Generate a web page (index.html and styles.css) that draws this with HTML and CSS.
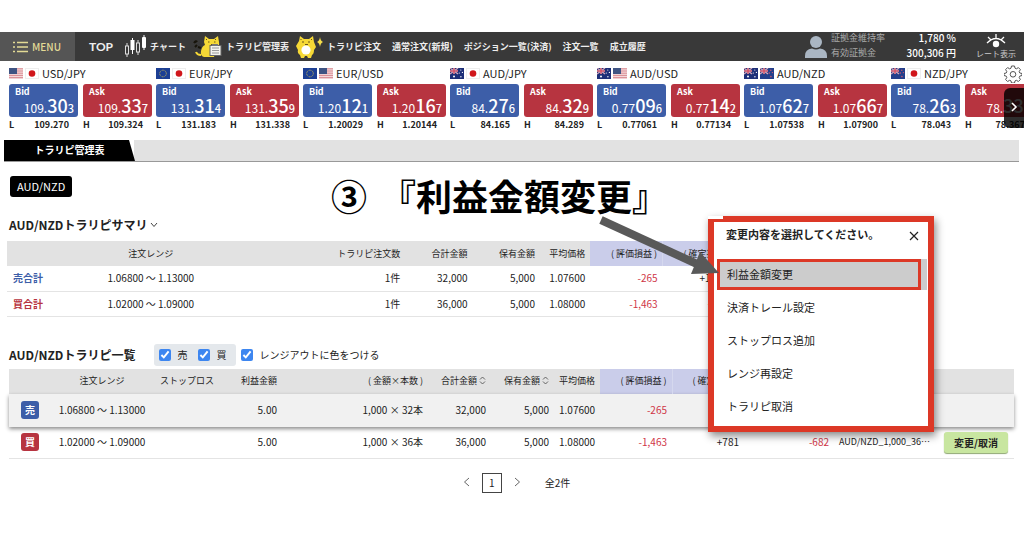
FILE: index.html
```html
<!DOCTYPE html>
<html lang="ja">
<head>
<meta charset="utf-8">
<meta name="viewport" content="width=device-width, initial-scale=1">
<title>トラリピ管理表</title>
<link rel="stylesheet" href="styles.css">
</head>
<body>
<svg class="defs" aria-hidden="true">
  <symbol id="us" viewBox="0 0 14 11"><rect width="14" height="11" fill="#f3d9db"/><path d="M0 .8h14M0 3h14M0 5.2h14M0 7.4h14M0 9.6h14" stroke="#d98a92"/><rect width="8" height="6" fill="#3f5483"/></symbol>
  <symbol id="jp" viewBox="0 0 14 11"><rect x=".5" y=".5" width="13" height="10" fill="#fff" stroke="#eee"/><circle cx="7" cy="5.5" r="3.3" fill="#d0161b"/></symbol>
  <symbol id="eu" viewBox="0 0 14 11"><rect width="14" height="11" fill="#1c3f94"/><circle cx="7" cy="5.5" r="3.3" fill="none" stroke="#b9ad5a" stroke-dasharray="1 .73"/></symbol>
  <symbol id="au" viewBox="0 0 14 11"><rect width="14" height="11" fill="#1d2f78"/><path d="M0 0l8 6M8 0L0 6" stroke="#d6a9bb" stroke-width="1.2"/><path d="M4 0v6M0 3h8" stroke="#e9c9d3" stroke-width="1.600"/><path d="M4 0v6M0 3h8" stroke="#d0344a"/><g fill="#fff"><circle cx="4" cy="8.6" r="1"/><circle cx="10.8" cy="2" r=".6"/><circle cx="9.3" cy="5" r=".6"/><circle cx="12.4" cy="4.4" r=".6"/><circle cx="10.9" cy="8.8" r=".7"/></g></symbol>
  <symbol id="nz" viewBox="0 0 14 11"><rect width="14" height="11" fill="#24408c"/><path d="M0 0l8 6M8 0L0 6" stroke="#d6a9bb" stroke-width="1.2"/><path d="M4 0v6M0 3h8" stroke="#e9c9d3" stroke-width="1.600"/><path d="M4 0v6M0 3h8" stroke="#d0344a"/><g fill="#d8576b"><circle cx="10.8" cy="2.2" r=".7"/><circle cx="9.3" cy="5" r=".7"/><circle cx="12.4" cy="4.6" r=".7"/><circle cx="10.9" cy="8.6" r=".8"/></g></symbol>
  <symbol id="sort" viewBox="0 0 7 9"><path d="M1 3.5l2.5-2.500 2.500 2.500M1 5.500l2.500 2.500 2.500-2.500" fill="none" stroke="#555" stroke-width=".9"/></symbol>
</svg>

<header class="topbar">
  <button class="menu" type="button">
    <svg width="15" height="12" viewBox="0 0 15 12"><path d="M4 1.500h11M4 6h11M4 10.500h11M0 1.500h2M0 6h2M0 10.500h2" stroke="#e2da95" stroke-width="1.400"/></svg>
    MENU
  </button>
  <nav class="nav">
    <a class="top" href="#">TOP</a>
    <a href="#"><svg width="23" height="23" viewBox="0 0 23 23"><g fill="none" stroke="#ddd"><path d="M3 8v3M3 19v3M14 5v3M14 17v3"/><rect x="1.500" y="11" width="3" height="8"/><rect x="12.500" y="8" width="3" height="9"/></g><path d="M8.500 3v16M20 0v15" stroke="#fff"/><rect x="6.500" y="5" width="4" height="10" fill="#fff"/><rect x="18" y="2" width="4" height="11" rx="1" fill="#fff"/></svg>チャート</a>
    <a class="cat-link" href="#"><svg width="30" height="23" viewBox="0 0 30 23"><path d="M11 7l1-6 4 3h5l4-3 1 6q1 5-3 8l-2 7H11q-4-1-3-6 1-5 4-6z" fill="#f6d936"/><path d="M8 20q-4 0-5-3" fill="none" stroke="#f6d936" stroke-width="2"/><path d="M1 8q2-3 3-1M2 12l2-2M8 13l-3-1" stroke="#17140a" stroke-width="2"/><path d="M15 7h1.500M21 7h1.500M18 9.500h2M13 4l1 1M23 4l-1 1" stroke="#69551b"/><rect x="17" y="10.500" width="11" height="10" fill="#f3f3ee" stroke="#666"/><path d="M19 13h7M19 15.500h7M19 18h7" stroke="#999"/><path d="M19 9h6v2h-6z" fill="#777"/></svg>トラリピ管理表</a>
    <a class="cat-link" href="#"><svg width="28" height="23" viewBox="0 0 28 23"><path d="M3 6l1-5 4 3h5l4-3 1 6 2 5-2 3q0 4-2 5l-1 3h-3l-1-2h-2l-1 2H5l-1-3q-3-2-2-5l-2-4z" fill="#f6d936"/><circle cx="10" cy="15" r="4.600" fill="#fff"/><path d="M6 7h2M12 7h2M9 9.500h3M4.500 4l1 1M16 4l-1 1" stroke="#69551b"/><path d="M24 2q.5 4 3 5-2.500 1-3 5-.5-4-3-5 2.500-1 3-5" fill="#f6df4b"/></svg>トラリピ注文</a>
    <a href="#">通常注文(新規)</a>
    <a href="#">ポジション一覧(決済)</a>
    <a href="#">注文一覧</a>
    <a href="#">成立履歴</a>
  </nav>
  <div class="account">
    <svg width="22" height="22" viewBox="0 0 22 22"><ellipse cx="11" cy="6" rx="6" ry="6" fill="#aab6c3"/><path d="M0 22v-2q0-7 7-7.500 4 2 8 0 7 .5 7 7.500v2z" fill="#aab6c3"/></svg>
    <dl class="margin">
      <dt>証拠金維持率</dt><dd>1,780 %</dd>
      <dt>有効証拠金</dt><dd>300,306 円</dd>
    </dl>
    <button class="rate-toggle" type="button">
      <svg width="20" height="14" viewBox="0 0 20 14"><path d="M1 9q9-9 18 0M2 3l3 3M10 0v4M18 3l-3 3" fill="none" stroke="#fff" stroke-width="1.300"/><circle cx="10" cy="10" r="3.200" fill="#fff"/></svg>
      レート表示
    </button>
  </div>
</header>

<section class="rates" aria-label="レート">
  <article class="pair"><h2><svg class="flag"><use href="#us"/></svg><svg class="flag"><use href="#jp"/></svg>USD/JPY</h2>
    <button class="bid" type="button"><b>Bid</b><span>109.<big>30</big><small>3</small></span></button><button class="ask" type="button"><b>Ask</b><span>109.<big>33</big><small>7</small></span></button>
    <p><span>L</span>109.270</p><p><span>H</span>109.324</p></article>
  <article class="pair"><h2><svg class="flag"><use href="#eu"/></svg><svg class="flag"><use href="#jp"/></svg>EUR/JPY</h2>
    <button class="bid" type="button"><b>Bid</b><span>131.<big>31</big><small>4</small></span></button><button class="ask" type="button"><b>Ask</b><span>131.<big>35</big><small>9</small></span></button>
    <p><span>L</span>131.183</p><p><span>H</span>131.338</p></article>
  <article class="pair"><h2><svg class="flag"><use href="#eu"/></svg><svg class="flag"><use href="#us"/></svg>EUR/USD</h2>
    <button class="bid" type="button"><b>Bid</b><span>1.20<big>12</big><small>1</small></span></button><button class="ask" type="button"><b>Ask</b><span>1.20<big>16</big><small>7</small></span></button>
    <p><span>L</span>1.20029</p><p><span>H</span>1.20144</p></article>
  <article class="pair"><h2><svg class="flag"><use href="#au"/></svg><svg class="flag"><use href="#jp"/></svg>AUD/JPY</h2>
    <button class="bid" type="button"><b>Bid</b><span>84.<big>27</big><small>6</small></span></button><button class="ask" type="button"><b>Ask</b><span>84.<big>32</big><small>9</small></span></button>
    <p><span>L</span>84.165</p><p><span>H</span>84.289</p></article>
  <article class="pair"><h2><svg class="flag"><use href="#au"/></svg><svg class="flag"><use href="#us"/></svg>AUD/USD</h2>
    <button class="bid" type="button"><b>Bid</b><span>0.77<big>09</big><small>6</small></span></button><button class="ask" type="button"><b>Ask</b><span>0.77<big>14</big><small>2</small></span></button>
    <p><span>L</span>0.77061</p><p><span>H</span>0.77134</p></article>
  <article class="pair"><h2><svg class="flag"><use href="#au"/></svg><svg class="flag"><use href="#nz"/></svg>AUD/NZD</h2>
    <button class="bid" type="button"><b>Bid</b><span>1.07<big>62</big><small>7</small></span></button><button class="ask" type="button"><b>Ask</b><span>1.07<big>66</big><small>7</small></span></button>
    <p><span>L</span>1.07538</p><p><span>H</span>1.07900</p></article>
  <article class="pair"><h2><svg class="flag"><use href="#nz"/></svg><svg class="flag"><use href="#jp"/></svg>NZD/JPY</h2>
    <button class="bid" type="button"><b>Bid</b><span>78.<big>26</big><small>3</small></span></button><button class="ask" type="button"><b>Ask</b><span>78.<big>33</big><small>7</small></span></button>
    <p><span>L</span>78.043</p><p><span>H</span>78.367</p></article>
  <button class="gear" type="button" aria-label="設定"><svg width="18" height="18" viewBox="0 0 18 18"><path d="M7.500 1h3l.5 2.200 1.400.6 2-1.200 2 2-1.200 2 .6 1.400 2.200.5v2l-2.200.6-.6 1.400 1.200 2-2 2-2-1.200-1.400.6-.5 2.100h-3l-.5-2.100-1.400-.6-2 1.200-2-2 1.200-2-.6-1.400L0 10.500v-2L2.200 8l.6-1.400-1.200-2 2-2 2 1.200L7 3.200z" fill="#fff" stroke="#555"/><circle cx="9" cy="9.300" r="2.800" fill="none" stroke="#555"/></svg></button>
  <button class="next" type="button" aria-label="次へ"><svg width="7" height="10" viewBox="0 0 7 10"><path d="M1 1l4 4-4 4" fill="none" stroke="#fff" stroke-width="1.600"/></svg></button>
</section>

<main>
  <div class="tabs"><a class="tab" href="#">トラリピ管理表</a></div>
  <button class="pair-chip" type="button">AUD/NZD</button>

  <h2 class="heading">AUD/NZDトラリピサマリ
    <svg width="8" height="6" viewBox="0 0 8 6"><path d="M1 1l3 3.500L7 1" fill="none" stroke="#444"/></svg></h2>
  <table class="grid summary">
    <colgroup><col class="s-label"><col class="s-range"><col class="s-count"><col class="s-total"><col class="s-total"><col class="s-avg"><col class="s-pl"><col class="s-pl"><col class="s-pl"></colgroup>
    <thead><tr><th></th><th class="center">注文レンジ</th><th>トラリピ注文数</th><th>合計金額</th><th>保有金額</th><th>平均価格</th><th class="pl">( 評価損益 )</th><th class="pl">( 確定損益 )</th><th class="pl">合計損益</th></tr></thead>
    <tbody>
      <tr><th class="sell">売合計</th><td class="center">1.06800 〜 1.13000</td><td>1件</td><td>32,000</td><td>5,000</td><td>1.07600</td><td class="minus">-265</td><td>+1,171</td><td>+906</td></tr>
      <tr><th class="buy">買合計</th><td class="center">1.02000 〜 1.09000</td><td>1件</td><td>36,000</td><td>5,000</td><td>1.08000</td><td class="minus">-1,463</td><td>+781</td><td class="minus">-682</td></tr>
    </tbody>
  </table>

  <div class="list-head">
    <h2 class="heading">AUD/NZDトラリピ一覧</h2>
    <div class="sides"><label><input type="checkbox" checked>売</label><label><input type="checkbox" checked>買</label></div>
    <label><input type="checkbox" checked>レンジアウトに色をつける</label>
  </div>
  <table class="grid list">
    <colgroup><col class="l-side"><col class="l-range"><col class="l-stop"><col class="l-profit"><col class="l-lots"><col class="l-total"><col class="l-total"><col class="l-avg"><col class="l-pl"><col class="l-pl"><col class="l-sum"><col class="l-name"><col class="l-action"></colgroup>
    <thead><tr><th></th><th class="center">注文レンジ</th><th class="center">ストップロス</th><th>利益金額</th><th>( 金額×本数 )</th><th>合計金額 <svg class="sort"><use href="#sort"/></svg></th><th>保有金額 <svg class="sort"><use href="#sort"/></svg></th><th>平均価格</th><th class="pl">( 評価損益 )</th><th class="pl">( 確定損益 )</th><th class="pl">合計損益</th><th></th><th></th></tr></thead>
    <tbody>
      <tr class="active"><td class="center"><span class="side sell-bg">売</span></td><td class="center">1.06800 〜 1.13000</td><td></td><td>5.00</td><td>1,000 × 32本</td><td>32,000</td><td>5,000</td><td>1.07600</td><td class="minus">-265</td><td></td><td></td><td></td><td></td></tr>
      <tr><td class="center"><span class="side buy-bg">買</span></td><td class="center">1.02000 〜 1.09000</td><td></td><td>5.00</td><td>1,000 × 36本</td><td>36,000</td><td>5,000</td><td>1.08000</td><td class="minus">-1,463</td><td>+781</td><td class="minus">-682</td><td class="name">AUD/NZD_1,000_36⋯</td><td><button class="change" type="button">変更/取消</button></td></tr>
    </tbody>
  </table>

  <nav class="pager" aria-label="ページ">
    <a href="#" aria-label="前へ"><svg width="7" height="10" viewBox="0 0 7 10"><path d="M6 1L1.500 5 6 9" fill="none" stroke="#666"/></svg></a>
    <a class="page" href="#">1</a>
    <a href="#" aria-label="次へ"><svg width="7" height="10" viewBox="0 0 7 10"><path d="M1 1l4.500 4L1 9" fill="none" stroke="#666"/></svg></a>
    <span class="total">全2件</span>
  </nav>
</main>

<p class="callout"><span>③</span><span>『利益金額変更』</span></p>

<div class="dialog" role="dialog" aria-labelledby="dialog-title">
  <div class="dialog-head"><h3 id="dialog-title">変更内容を選択してください。</h3>
    <button type="button" aria-label="閉じる"><svg width="10" height="10" viewBox="0 0 10 10"><path d="M1 1l8 8M9 1L1 9" stroke="#222" stroke-width="1.200"/></svg></button></div>
  <div class="options">
    <button class="chosen" type="button">利益金額変更</button>
    <button type="button">決済トレール設定</button>
    <button type="button">ストップロス追加</button>
    <button type="button">レンジ再設定</button>
    <button type="button">トラリピ取消</button>
  </div>
</div>

<svg class="arrow" width="124" height="64" viewBox="0 0 124 64"><path d="M4 6L100 50" stroke="#595959" stroke-width="8"/><path d="M122 59L103 38 94 60z" fill="#595959"/></svg>
</body>
</html>
```

FILE: styles.css
```css
* { box-sizing: border-box; }

body {
  position: relative;
  margin: 0;
  padding-top: 32px;
  background: #fff;
  color: #222;
  font: 10px/14px "Noto Sans CJK JP", "Noto Sans", sans-serif;
  overflow-x: hidden;
}

h2, h3, p, dl, dd { margin: 0; }
a { color: inherit; text-decoration: none; }
button { margin: 0; padding: 0; border: 0; background: none; color: inherit; font: inherit; cursor: pointer; }
svg { flex: none; }
.defs { position: absolute; width: 0; height: 0; }

/* Top bar */
.topbar { display: flex; align-items: stretch; height: 29px; background: #393939; color: #fff; white-space: nowrap; }
.menu { display: flex; align-items: center; gap: 4px; padding: 0 14px 0 13px; background: #555; color: #e2da95; font-size: 10px; font-weight: 500; }
.nav { display: flex; align-items: center; gap: 11px; flex: 1; padding-left: 14px; font-size: 9px; font-weight: 700; color: #eee; }
.nav a { display: flex; align-items: center; gap: 3px; }
.nav .top { font: 700 12px/14px Lato, sans-serif; }
.nav .cat-link { margin-left: -4px; }
.account { display: flex; align-items: center; gap: 4px; padding-right: 8px; }
.margin { display: grid; grid-template-columns: 64px 61px; padding-bottom: 3px; line-height: 15px; }
.margin dt { color: #aaa; font-size: 9px; }
.margin dd { text-align: right; font-weight: 500; }
.rate-toggle { display: flex; flex-direction: column; align-items: center; margin-left: 16px; color: #ccc; font-size: 8px; line-height: 12px; }

/* Rate strip */
.rates { position: relative; display: flex; gap: 4px; padding: 5px 0 9px 9px; overflow: hidden; }
.pair { display: grid; grid-template-columns: 69px 69px; column-gap: 5px; flex: none; }
.pair h2 { grid-column: 1 / 3; display: flex; align-items: center; gap: 2px; height: 14px; margin-bottom: 4px; font-size: 11px; font-weight: 400; }
.pair h2 .flag:nth-child(2) { margin-right: 1px; }
.flag { width: 14px; height: 11px; }
.bid, .ask { display: flex; flex-direction: column; justify-content: space-between; height: 33px; padding: 3px 4px 4px 6px; border-radius: 3px; color: #fff; text-align: left; }
.bid { background: #3d5ea8; }
.ask { background: #b73440; }
.bid b, .ask b { font-size: 9px; line-height: 10px; }
.bid span, .ask span { align-self: flex-end; font-size: 12px; line-height: 16px; }
.pair big { font-size: 18px; line-height: 16px; font-weight: 500; }
.pair small { font-size: 11px; font-weight: 500; }
.pair p { display: flex; justify-content: space-between; padding: 1px 9px 0 0; font-size: 9px; line-height: 13px; font-weight: 600; }
.gear { position: absolute; top: 4px; right: 2px; height: 18px; }
.next { position: absolute; top: 27px; right: 0; width: 20px; height: 40px; border-radius: 6px 0 0 6px; background: rgba(0, 0, 0, .82); }

/* Page body */
.tabs { margin: 0 5px 14px 4px; border-bottom: 1px solid #999; background: linear-gradient(#e2e2e2, #e2e2e2) no-repeat 130px 0; }
.tab { display: block; width: 131px; padding: 0 0 1px; background: #000; color: #fff; clip-path: polygon(0 0, 125px 0, 100% 100%, 0 100%); text-align: center; font-weight: 700; line-height: 20px; }
.pair-chip { display: block; margin: 0 10px 19px; padding: 0 7px; border-radius: 3px; background: #000; color: #fff; font-size: 11px; line-height: 21px; }
.heading { font-size: 12px; line-height: 18px; font-weight: 600; }
main > .heading { display: flex; align-items: center; gap: 3px; margin: 0 9px 7px; }

.grid { table-layout: fixed; border-collapse: collapse; }
.grid th, .grid td { padding: 0 5px; text-align: right; white-space: nowrap; border-bottom: 1px solid #e4e4e4; }
.grid thead th { height: 25px; border: 0; background: #e2e2e2; font-size: 9px; font-weight: 400; }
.grid .center { text-align: center; }
.grid thead .pl { background: #cacdea; border-right: 1px solid #d5d8ee; }
.grid .minus { color: #cf3546; }

.summary { width: 801px; margin-left: 7px; }
.summary td, .summary tbody th { height: 25px; }
.summary tbody th { padding-left: 6px; text-align: left; }
.summary .sell { color: #3d5ea8; }
.summary .buy { color: #b73440; }
.s-label { width: 65px; }
.s-range { width: 156px; }
.s-count { width: 175px; }
.s-total { width: 67px; }
.s-avg { width: 50px; }
.s-pl { width: 72px; }

.list-head { display: flex; align-items: center; gap: 5px; margin: 27px 9px 3px; }
.list-head .heading { margin-right: 14px; }
.list-head label { display: flex; align-items: center; gap: 6px; }
.list-head input { width: 12px; height: 12px; margin: 0; accent-color: #3d86f0; }
.sides { display: flex; gap: 11px; padding: 4px 10px 4px 5px; border-radius: 3px; background: #e4e8ec; }

.list { width: calc(100% - 19px); margin-left: 9px; }
.list td { height: 32px; }
.list .active td { height: 33px; background: #f1f1f1; border: 0; }
.list .active { box-shadow: 0 2px 4px rgba(0, 0, 0, .45); }
.sort { width: 7px; height: 9px; vertical-align: -1px; }
.side { display: inline-block; width: 18px; height: 18px; border-radius: 3px; color: #fff; font-weight: 700; line-height: 17px; text-align: center; vertical-align: middle; }
.sell-bg { background: #3d5ea8; }
.buy-bg { background: #b73440; }
.list .name { text-align: left; font-size: 9px; }
.change { width: 64px; margin-right: 1px; border-radius: 3px; background: #c8e6a0; box-shadow: 0 1px 1px #8fa873; font-weight: 700; line-height: 21px; }
.l-side { width: 42px; }
.l-range { width: 102px; }
.l-stop { width: 68px; }
.l-profit { width: 61px; }
.l-lots { width: 146px; }
.l-total { width: 63px; }
.l-avg { width: 46px; }
.l-pl { width: 72px; }
.l-sum { width: 90px; }
.l-name { width: 100px; }
.l-action { width: 80px; }

.pager { display: flex; align-items: center; justify-content: center; gap: 12px; margin: 14px 0 42px; padding-left: 9px; }
.pager .page { width: 20px; border: 1px solid #444; text-align: center; line-height: 18px; }
.pager .total { margin-left: 12px; }

/* Annotation layer */
.callout { position: absolute; top: 169px; left: 331px; display: flex; gap: 13px; color: #000; font-size: 36px; line-height: 52px; font-weight: 700; white-space: nowrap; }
.dialog { position: absolute; top: 216px; left: 708px; width: 226px; border: 6px solid #dc3826; background: #fff; box-shadow: 2px 4px 8px rgba(0, 0, 0, .45); font-size: 11px; }
.dialog::before { content: ""; position: absolute; top: -6px; left: -6px; width: 15px; height: 3px; background: #fff; }
.dialog-head { display: flex; align-items: center; justify-content: space-between; padding: 3px 9px 16px 12px; }
.dialog-head h3 { font-size: 11px; line-height: 18px; font-weight: 700; }
.dialog-head button { height: 10px; }
.options { display: flex; flex-direction: column; gap: 2px; padding: 0 1px 4px 3px; }
.options button { padding: 0 10px; line-height: 31px; text-align: left; }
.options .chosen { margin-right: 6px; padding: 0 7px; border: 3px solid #dc3826; background: #ccc; box-shadow: 6px 0 0 #ccc; line-height: 25px; }
.arrow { position: absolute; top: 214px; left: 597px; }
```
